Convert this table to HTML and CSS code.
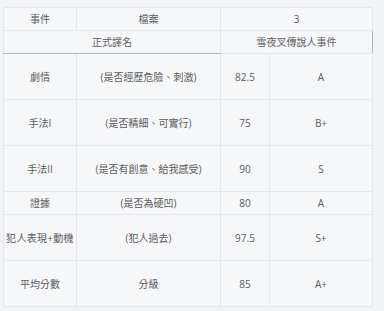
FILE: index.html
```html
<!DOCTYPE html>
<html lang="zh-Hant">
<head>
<meta charset="utf-8">
<link rel="stylesheet" href="styles.css">
</head>
<body>
<table class="score">
  <colgroup>
    <col class="c1"><col class="c2"><col class="c3"><col class="c4">
  </colgroup>
  <tr class="short">
    <td>事件</td><td>檔案</td><td colspan="2">3</td>
  </tr>
  <tr class="short">
    <td colspan="2" class="mark-bottom">正式譯名</td>
    <td colspan="2" class="mark-box">雪夜叉傳說人事件</td>
  </tr>
  <tr class="tall">
    <td>劇情</td><td>(是否經歷危險、刺激)</td><td>82.5</td><td>A</td>
  </tr>
  <tr class="tall">
    <td>手法I</td><td>(是否精細、可實行)</td><td>75</td><td>B+</td>
  </tr>
  <tr class="tall">
    <td>手法II</td><td>(是否有創意、給我感受)</td><td>90</td><td>S</td>
  </tr>
  <tr class="short">
    <td>證據</td><td>(是否為硬凹)</td><td>80</td><td>A</td>
  </tr>
  <tr class="tall">
    <td class="tight">犯人表現+動機</td><td>(犯人過去)</td><td>97.5</td><td>S+</td>
  </tr>
  <tr class="tall">
    <td>平均分數</td><td>分級</td><td>85</td><td>A+</td>
  </tr>
</table>
</body>
</html>
```
FILE: styles.css
```css
html, body {
  margin: 0;
  padding: 0;
  background: #f2f3f6;
}
body {
  padding: 7px 0 0 3px;
  font-family: "Open Sans", "Noto Sans CJK TC", sans-serif;
  font-size: 10px;
  color: #5c5c5c;
}
.score {
  border-collapse: collapse;
  table-layout: fixed;
  width: 369px;
  background: #f6f7f9;
}
.c1 { width: 73px; }
.c2 { width: 144px; }
.c3 { width: 49px; }
.c4 { width: 103px; }
.score td {
  border: 1px solid #e5e7eb;
  padding: 0;
  text-align: center;
  vertical-align: middle;
  white-space: nowrap;
  line-height: 14px;
}
.short td { height: 22px; }
.tall td { height: 45px; }
.score td.mark-bottom {
  border-bottom: 1px solid #b3b6bc;
}
.score td.mark-box {
  border-top: 1px solid #b3b6bc;
  border-right: 1px solid #b3b6bc;
}
.tight { letter-spacing: 0.3px; }
```
